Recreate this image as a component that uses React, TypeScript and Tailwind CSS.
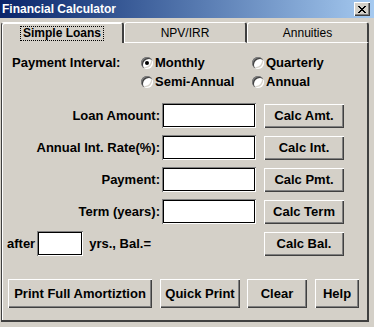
import React from "react";

const raised =
  "shadow-[inset_1px_1px_#ffffff,inset_-1px_-1px_#404040,inset_-2px_-2px_#808080]";
const sunken =
  "shadow-[inset_1px_1px_#808080,inset_-1px_-1px_#ffffff,inset_2px_2px_#000000,inset_-2px_-2px_#000000]";

function Btn({ children, className = "" }: { children: React.ReactNode; className?: string }) {
  return (
    <div
      className={`flex items-center justify-center bg-[#d4d0c8] text-[13px] font-bold text-black leading-none ${raised} ${className}`}
    >
      {children}
    </div>
  );
}

function Input({ className = "" }: { className?: string }) {
  return <div className={`bg-white ${sunken} ${className}`} />;
}

function Radio({ checked, label }: { checked?: boolean; label: string }) {
  return (
    <div className="flex items-center">
      <div className="relative w-[12px] h-[12px] rounded-full bg-white shadow-[inset_1px_1px_#808080,inset_2px_2px_#404040,inset_-1px_-1px_#ffffff,inset_-2px_-2px_#d4d0c8]">
        {checked && (
          <div className="absolute left-[4px] top-[4px] w-[4px] h-[4px] rounded-full bg-black" />
        )}
      </div>
      <span className="ml-[2px] text-[13px] font-bold">{label}</span>
    </div>
  );
}

function FormRow({ label, btn }: { label: string; btn: string }) {
  return (
    <div className="flex items-center h-[25px]">
      <div className="w-[160px] text-right pr-[2px] text-[13px] font-bold">{label}</div>
      <Input className="w-[94px] h-[25px]" />
      <Btn className="ml-[8px] w-[80px] h-[24px]">{btn}</Btn>
    </div>
  );
}

export default function App() {
  return (
    <div className="w-[374px] h-[327px] bg-[#d4d0c8] overflow-hidden font-['Liberation_Sans',Arial,sans-serif] text-black">
      {/* Title bar */}
      <div className="h-[18px] flex items-center justify-between bg-gradient-to-r from-[#0a246a] to-[#a6caf0] pl-[2px] pr-[4px]">
        <span className="text-white text-[12px] font-bold leading-none">Financial Calculator</span>
        <div className="w-[16px] h-[14px] bg-[#d4d0c8] flex items-center justify-center shadow-[inset_1px_1px_#ffffff,inset_-1px_-1px_#404040,inset_-2px_-2px_#808080]">
          <svg width="8" height="7" viewBox="0 0 8 7" shapeRendering="crispEdges">
            <path
              d="M0 0h2v1H0zM6 0h2v1H6zM1 1h2v1H1zM5 1h2v1H5zM2 2h4v1H2zM3 3h2v1H3zM2 4h4v1H2zM1 5h2v1H1zM5 5h2v1H5zM0 6h2v1H0zM6 6h2v1H6z"
              fill="#000"
            />
          </svg>
        </div>
      </div>

      {/* Tabs */}
      <div className="mt-[4px] flex h-[21px] pl-[1px]">
        <div className="w-[123px] h-[21px] border-l border-t border-r-2 border-l-[#404040] border-t-[#ffffff] border-r-[#404040] rounded-tl-[3px] rounded-tr-[3px] shadow-[inset_1px_1px_#ffffff] flex items-center justify-center">
          <span className="border border-dotted border-black px-[2px] text-[12px] font-bold leading-[13px]">
            Simple Loans
          </span>
        </div>
        <div className="w-[123px] h-[21px] border-l border-t border-r-2 border-b border-l-[#ffffff] border-t-[#ffffff] border-r-[#404040] border-b-[#ffffff] rounded-tl-[3px] rounded-tr-[3px] flex items-center justify-center text-[12px]">
          NPV/IRR
        </div>
        <div className="w-[122px] h-[21px] border-l border-t border-r-2 border-b border-l-[#ffffff] border-t-[#ffffff] border-r-[#404040] border-b-[#ffffff] rounded-tl-[3px] rounded-tr-[3px] flex items-center justify-center text-[12px]">
          Annuities
        </div>
      </div>

      {/* Panel */}
      <div className="ml-[1px] w-[368px] h-[279px] border-l border-l-[#404040] border-r-2 border-r-[#404040] border-b-2 border-b-[#404040] shadow-[inset_1px_0_#ffffff] pt-[10px]">
        {/* Payment interval */}
        <div className="flex">
          <div className="pl-[10px] w-[139px] h-[19px] flex items-center text-[13px] font-bold">
            Payment Interval:
          </div>
          <div className="grid grid-cols-[111px_auto]">
            <div className="h-[19px] flex items-center">
              <Radio checked label="Monthly" />
            </div>
            <div className="h-[19px] flex items-center">
              <Radio label="Quarterly" />
            </div>
            <div className="h-[19px] flex items-center">
              <Radio label="Semi-Annual" />
            </div>
            <div className="h-[19px] flex items-center">
              <Radio label="Annual" />
            </div>
          </div>
        </div>

        <div className="mt-[12px] flex flex-col gap-[7px]">
          <FormRow label="Loan Amount:" btn="Calc Amt." />
          <FormRow label="Annual Int. Rate(%):" btn="Calc Int." />
          <FormRow label="Payment:" btn="Calc Pmt." />
          <FormRow label="Term (years):" btn="Calc Term" />
          <div className="flex items-center h-[25px] w-[342px]">
            <span className="pl-[5px] text-[13px] font-bold">after</span>
            <Input className="ml-[2px] w-[46px] h-[25px]" />
            <span className="ml-[6px] text-[13px] font-bold">yrs., Bal.=</span>
            <Btn className="ml-auto w-[80px] h-[24px]">Calc Bal.</Btn>
          </div>
        </div>

        <div className="mt-[23px] flex pl-[6px] h-[29px]">
          <Btn className="w-[144px] h-[29px]">Print Full Amortiztion</Btn>
          <Btn className="ml-[8px] w-[80px] h-[29px]">Quick Print</Btn>
          <Btn className="ml-[7px] w-[60px] h-[29px]">Clear</Btn>
          <Btn className="ml-[8px] w-[44px] h-[29px]">Help</Btn>
        </div>
      </div>
    </div>
  );
}
